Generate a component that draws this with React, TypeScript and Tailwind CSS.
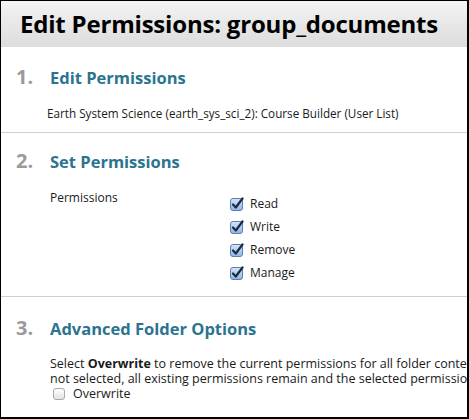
import React from 'react';

const perms = ['Read', 'Write', 'Remove', 'Manage'];

function CheckBox({ checked }: { checked: boolean }) {
  if (!checked) {
    return (
      <span className="block h-[12px] w-[12px] rounded-[3px] border border-[#a9a9a9] bg-gradient-to-b from-[#ffffff] to-[#e3e3e3]" />
    );
  }
  return (
    <svg width="14" height="14" viewBox="0 0 14 14" className="block">
      <defs>
        <linearGradient id="cb" x1="0" y1="0" x2="0" y2="1">
          <stop offset="0" stopColor="#d7e6f7" />
          <stop offset="1" stopColor="#8fb4e3" />
        </linearGradient>
      </defs>
      <rect x="0.5" y="1.5" width="12" height="12" rx="2.5" fill="url(#cb)" stroke="#5b7fb5" />
      <path d="M3 7.5 L5.8 10.5 L12.5 1.5" fill="none" stroke="#1b2a44" strokeWidth="2.2" strokeLinecap="round" strokeLinejoin="round" />
    </svg>
  );
}

function StepTitle({ n, title }: { n: number; title: string }) {
  return (
    <div className="flex items-baseline pl-[15px]">
      <span className="w-[34px] text-[20px] font-bold text-[#9a9a9a]">{n}.</span>
      <span className="text-[16.5px] font-bold text-[#2b7490]">{title}</span>
    </div>
  );
}

export default function App() {
  return (
    <div
      className="flex h-[419px] w-[469px] flex-col overflow-hidden border-t border-l border-r-2 border-b-2 border-black bg-white text-[#1a1a1a]"
      style={{ fontFamily: '"Open Sans", "Liberation Sans", sans-serif' }}
    >
      <div className="flex h-[46px] shrink-0 items-center bg-gradient-to-b from-[#f4f4f4] to-[#dcdcdc] pl-[19px]">
        <h1 className="text-[24px] font-bold tracking-[-0.2px] text-black">Edit Permissions: group_documents</h1>
      </div>

      <div className="h-[86px] shrink-0 border-b border-[#cfcfcf] pt-[15px]">
        <StepTitle n={1} title="Edit Permissions" />
        <p className="mt-[13px] pl-[46px] text-[11.7px] whitespace-nowrap">
          Earth System Science (earth_sys_sci_2): Course Builder (User List)
        </p>
      </div>

      <div className="h-[164px] shrink-0 border-b border-[#cfcfcf] pt-[13px]">
        <StepTitle n={2} title="Set Permissions" />
        <div className="mt-[13px] flex pl-[49px]">
          <span className="w-[180px] text-[12px]">Permissions</span>
          <div className="mt-[6px] flex flex-col gap-[5px]">
            {perms.map((p) => (
              <label key={p} className="flex items-center gap-[6px] text-[12px]">
                <CheckBox checked />
                <span>{p}</span>
              </label>
            ))}
          </div>
        </div>
      </div>

      <div className="flex-1 pt-[16px]">
        <StepTitle n={3} title="Advanced Folder Options" />
        <div className="mt-[13px] overflow-hidden pl-[49px] text-[12.5px] leading-[15px] whitespace-nowrap">
          <p>
            Select <b>Overwrite</b> to remove the current permissions for all folder contents and replace them with the selected permissions. If
          </p>
          <p>not selected, all existing permissions remain and the selected permissions are added.</p>
          <label className="flex items-center gap-[8px] pl-[3px]">
            <CheckBox checked={false} />
            <span>Overwrite</span>
          </label>
        </div>
      </div>
    </div>
  );
}
